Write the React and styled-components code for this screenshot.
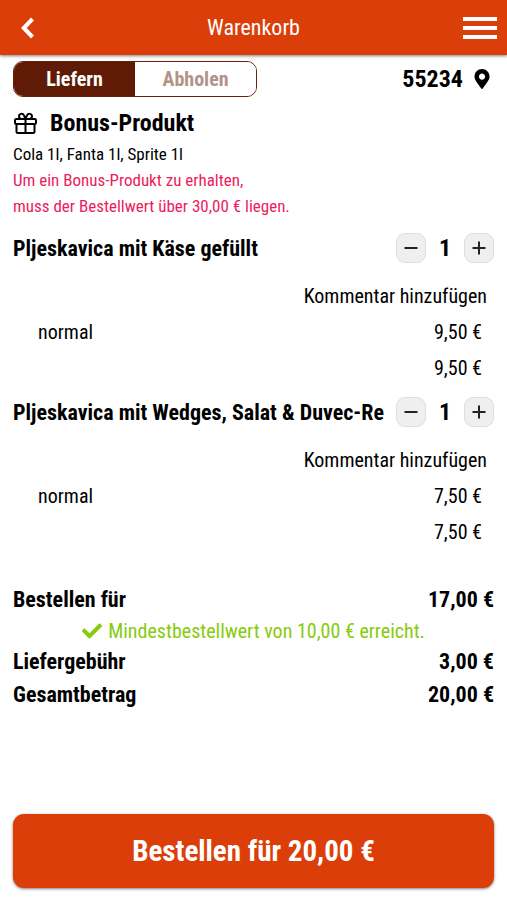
import React, { useState } from 'react';
import styled, { createGlobalStyle } from 'styled-components';
import { FaCheck, FaMapMarkerAlt } from 'react-icons/fa';

const GlobalStyle = createGlobalStyle`
  *, *::before, *::after {
    box-sizing: border-box;
  }

  body {
    margin: 0;
    background: #fff;
    color: #000;
    font-family: 'Roboto Condensed', Roboto, 'Liberation Sans', sans-serif;
    font-size: 20px;
  }

  button {
    padding: 0;
    border: 0;
    background: none;
    color: inherit;
    font: inherit;
    cursor: pointer;
  }

  h1, h2, p, ul, dl, dd {
    margin: 0;
    padding: 0;
  }
`;

const Page = styled.div`
  display: flex;
  flex-direction: column;
  min-height: 100vh;
`;

const Header = styled.header`
  display: grid;
  grid-template-columns: 60px 1fr 60px;
  align-items: center;
  height: 55px;
  background: #dc3e0a;
  box-shadow: 0 1px 3px rgba(0, 0, 0, 0.5);
  color: #fff;
  text-align: center;
`;

const HeaderTitle = styled.h1`
  font-size: 22px;
  font-weight: 400;
`;

const BackButton = styled.button`
  display: flex;
  padding-left: 20px;
`;

const MenuButton = styled.button`
  display: grid;
  gap: 5px;
  width: 34px;
  margin-left: 16px;
`;

const MenuBar = styled.span`
  height: 4px;
  background: #fff;
`;

const Content = styled.main`
  flex: 1;
  padding: 6px 13px 0;
`;

const DeliveryRow = styled.div`
  display: flex;
  align-items: center;
  justify-content: space-between;
`;

const Toggle = styled.div`
  display: grid;
  grid-template-columns: 1fr 1fr;
  flex: 0 1 244px;
  height: 36px;
  border: 1px solid #682008;
  border-radius: 10px;
  overflow: hidden;
`;

const ToggleButton = styled.button`
  background: ${({ $active }) => ($active ? '#5f1b05' : '#fff')};
  color: ${({ $active }) => ($active ? '#fff' : '#b29389')};
  font-size: 20px;
  font-weight: 700;
`;

const Postcode = styled.button`
  display: flex;
  align-items: center;
  gap: 9px;
  margin-right: 2px;
  font-size: 24px;
  font-weight: 700;

  svg {
    font-size: 20px;
  }
`;

const Bonus = styled.section`
  padding-top: 8px;
  font-size: 17px;
  line-height: 26px;
`;

const BonusTitle = styled.h2`
  display: flex;
  align-items: center;
  gap: 13px;
  height: 36px;
  font-size: 24px;
  font-weight: 700;
`;

const BonusHint = styled.p`
  color: #ec1b5c;
`;

const ItemList = styled.ul`
  padding-top: 11px;
  list-style: none;
`;

const Item = styled.li`
  height: 164px;
`;

const ItemHead = styled.div`
  display: flex;
  align-items: center;
  gap: 12px;
  height: 36px;
`;

const ItemName = styled.h2`
  flex: 1;
  font-size: 22px;
  font-weight: 700;
  white-space: nowrap;
`;

const Counter = styled.div`
  display: grid;
  grid-template-columns: 30px 38px 30px;
  align-items: center;
  text-align: center;
  font-size: 24px;
  font-weight: 700;
`;

const CounterButton = styled.button`
  display: grid;
  place-items: center;
  height: 30px;
  border: 1px solid #dedede;
  border-radius: 9px;
  background: #efefef;
`;

const CommentButton = styled.button`
  display: block;
  height: 36px;
  margin: 12px 7px 0 auto;
`;

const PriceRow = styled.div`
  display: flex;
  align-items: center;
  justify-content: space-between;
  height: 36px;
  padding: 0 12px 0 25px;
`;

const Summary = styled.dl`
  padding-top: 25px;
`;

const SummaryRow = styled.div`
  display: flex;
  align-items: center;
  justify-content: space-between;
  height: 33px;
  font-size: 22px;
  font-weight: 700;
`;

const MinimumReached = styled.div`
  display: flex;
  align-items: center;
  justify-content: center;
  gap: 6px;
  height: 29px;
  color: #86cc0c;
`;

const Footer = styled.footer`
  padding: 12px 13px;
`;

const OrderButton = styled.button`
  width: 100%;
  height: 74px;
  border-radius: 11px;
  background: #dc3e0a;
  box-shadow: 0 1px 3px rgba(0, 0, 0, 0.5);
  color: #fff;
  font-size: 29px;
  font-weight: 700;
`;

const DELIVERY_FEE = 3;

const products = [
  { id: 1, name: 'Pljeskavica mit Käse gefüllt', size: 'normal', price: 9.5 },
  { id: 2, name: 'Pljeskavica mit Wedges, Salat & Duvec-Re', size: 'normal', price: 7.5 },
];

const formatPrice = (value) => `${value.toFixed(2).replace('.', ',')} €`;

const BackIcon = () => (
  <svg width="16" height="24" viewBox="0 0 16 24" fill="none" stroke="#fff" strokeWidth="4">
    <path d="M12.5 3L3.8 12l8.7 9" />
  </svg>
);

const GiftIcon = () => (
  <svg
    width="24"
    height="24"
    viewBox="0 0 24 24"
    fill="none"
    stroke="#000"
    strokeWidth="2"
    strokeLinejoin="round"
  >
    <rect x="2" y="8" width="21" height="5" rx="1.2" />
    <path d="M3.5 13v7.5a1.5 1.5 0 0 0 1.5 1.5h15a1.5 1.5 0 0 0 1.5-1.5V13M12.5 8v14" />
    <path d="M12.5 8H8.6a2.6 2.6 0 1 1 2.5-3.4zM12.5 8h3.9a2.6 2.6 0 1 0-2.5-3.4z" />
  </svg>
);

const CartItem = ({ product, count, onChange }) => (
  <Item>
    <ItemHead>
      <ItemName>{product.name}</ItemName>
      <Counter>
        <CounterButton aria-label="Weniger" onClick={() => onChange(Math.max(1, count - 1))}>
          <svg width="14" height="14" viewBox="0 0 14 14" stroke="#222" strokeWidth="2">
            <path d="M0.5 7h13" />
          </svg>
        </CounterButton>
        <span>{count}</span>
        <CounterButton aria-label="Mehr" onClick={() => onChange(count + 1)}>
          <svg width="14" height="14" viewBox="0 0 14 14" stroke="#222" strokeWidth="2">
            <path d="M0.5 7h13M7 0.5v13" />
          </svg>
        </CounterButton>
      </Counter>
    </ItemHead>
    <CommentButton>Kommentar hinzufügen</CommentButton>
    <PriceRow>
      <span>{product.size}</span>
      <span>{formatPrice(product.price)}</span>
    </PriceRow>
    <PriceRow>
      <span />
      <span>{formatPrice(product.price * count)}</span>
    </PriceRow>
  </Item>
);

const App = () => {
  const [mode, setMode] = useState('liefern');
  const [counts, setCounts] = useState({ 1: 1, 2: 1 });

  const subtotal = products.reduce((sum, { id, price }) => sum + price * counts[id], 0);
  const total = subtotal + DELIVERY_FEE;

  return (
    <Page>
      <GlobalStyle />
      <Header>
        <BackButton aria-label="Zurück">
          <BackIcon />
        </BackButton>
        <HeaderTitle>Warenkorb</HeaderTitle>
        <MenuButton aria-label="Menü">
          <MenuBar />
          <MenuBar />
          <MenuBar />
        </MenuButton>
      </Header>
      <Content>
        <DeliveryRow>
          <Toggle>
            <ToggleButton $active={mode === 'liefern'} onClick={() => setMode('liefern')}>
              Liefern
            </ToggleButton>
            <ToggleButton $active={mode === 'abholen'} onClick={() => setMode('abholen')}>
              Abholen
            </ToggleButton>
          </Toggle>
          <Postcode>
            55234
            <FaMapMarkerAlt />
          </Postcode>
        </DeliveryRow>
        <Bonus>
          <BonusTitle>
            <GiftIcon />
            Bonus-Produkt
          </BonusTitle>
          <p>Cola 1l, Fanta 1l, Sprite 1l</p>
          <BonusHint>
            Um ein Bonus-Produkt zu erhalten,
            <br />
            muss der Bestellwert über 30,00 € liegen.
          </BonusHint>
        </Bonus>
        <ItemList>
          {products.map((product) => (
            <CartItem
              key={product.id}
              product={product}
              count={counts[product.id]}
              onChange={(value) => setCounts({ ...counts, [product.id]: value })}
            />
          ))}
        </ItemList>
        <Summary>
          <SummaryRow>
            <dt>Bestellen für</dt>
            <dd>{formatPrice(subtotal)}</dd>
          </SummaryRow>
          <MinimumReached>
            <FaCheck />
            Mindestbestellwert von 10,00 € erreicht.
          </MinimumReached>
          <SummaryRow>
            <dt>Liefergebühr</dt>
            <dd>{formatPrice(DELIVERY_FEE)}</dd>
          </SummaryRow>
          <SummaryRow>
            <dt>Gesamtbetrag</dt>
            <dd>{formatPrice(total)}</dd>
          </SummaryRow>
        </Summary>
      </Content>
      <Footer>
        <OrderButton>Bestellen für {formatPrice(total)}</OrderButton>
      </Footer>
    </Page>
  );
};

export default App;
